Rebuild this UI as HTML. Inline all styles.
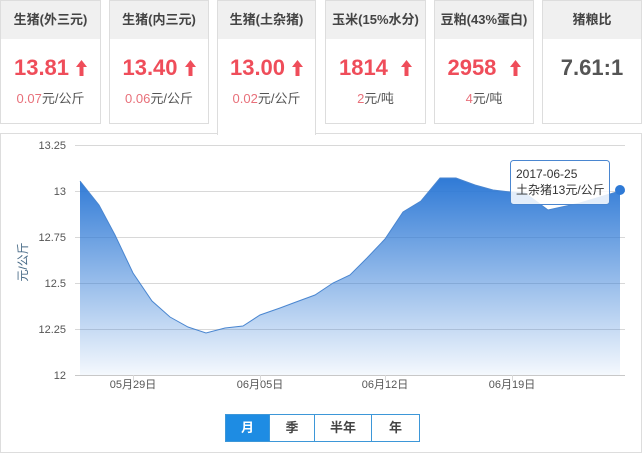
<!DOCTYPE html><html><head><meta charset="utf-8"><style>
body{margin:0;width:642px;height:453px;background:#fff;font-family:"Liberation Sans","Noto Sans CJK SC",sans-serif;position:relative;overflow:hidden}
.c{position:absolute;top:0;height:124px;border:1px solid #ddd;background:#fff;box-sizing:border-box;text-align:center}
.c .h{height:38px;background:#f0f0f0;line-height:38px;font-size:13px;font-weight:bold;color:#444}
.c .v{margin-top:16px;font-size:22px;font-weight:bold;color:#ef4d5a;height:26px;line-height:26px}
.c .v svg{margin-left:7px;vertical-align:-1px}
.c .s{margin-top:7px;font-size:13px;color:#555}
.c .s b{font-weight:normal;color:#e8707a}
.panel{position:absolute;left:0;top:133px;width:642px;height:320px;border:1px solid #ddd;box-sizing:border-box}
.btns{position:absolute;left:225px;top:414px;height:28px;display:flex;border:1px solid #3d97d8;box-sizing:border-box}
.btns div{height:26px;line-height:26px;text-align:center;font-size:13px;font-weight:bold;color:#444;border-left:1px solid #3d97d8}
</style></head><body>
<div class="c" style="left:0;width:101px"><div class="h">生猪(外三元)</div><div class="v">13.81<svg width="11" height="16" viewBox="0 0 11 16"><path d="M5.5,0 L11,7 L7.5,7 L7.5,16 L3.5,16 L3.5,7 L0,7Z" fill="#ef4d5a"/></svg></div><div class="s"><b>0.07</b>元/公斤</div></div>
<div class="c" style="left:109px;width:100px"><div class="h">生猪(内三元)</div><div class="v">13.40<svg width="11" height="16" viewBox="0 0 11 16"><path d="M5.5,0 L11,7 L7.5,7 L7.5,16 L3.5,16 L3.5,7 L0,7Z" fill="#ef4d5a"/></svg></div><div class="s"><b>0.06</b>元/公斤</div></div>
<div class="panel"></div>
<div class="c" style="left:217px;width:99px;height:135px;border-bottom:none;z-index:2"><div class="h">生猪(土杂猪)</div><div class="v">13.00<svg width="11" height="16" viewBox="0 0 11 16"><path d="M5.5,0 L11,7 L7.5,7 L7.5,16 L3.5,16 L3.5,7 L0,7Z" fill="#ef4d5a"/></svg></div><div class="s"><b>0.02</b>元/公斤</div></div>
<div class="c" style="left:325px;width:101px"><div class="h">玉米(15%水分)</div><div class="v">1814 <svg width="11" height="16" viewBox="0 0 11 16"><path d="M5.5,0 L11,7 L7.5,7 L7.5,16 L3.5,16 L3.5,7 L0,7Z" fill="#ef4d5a"/></svg></div><div class="s"><b>2</b>元/吨</div></div>
<div class="c" style="left:434px;width:100px"><div class="h">豆粕(43%蛋白)</div><div class="v">2958 <svg width="11" height="16" viewBox="0 0 11 16"><path d="M5.5,0 L11,7 L7.5,7 L7.5,16 L3.5,16 L3.5,7 L0,7Z" fill="#ef4d5a"/></svg></div><div class="s"><b>4</b>元/吨</div></div>
<div class="c" style="left:542px;width:100px"><div class="h">猪粮比</div><div class="v" style="color:#555">7.61:1</div></div>
<svg style="position:absolute;left:0;top:0" width="642" height="453" font-family="Liberation Sans,Noto Sans CJK SC,sans-serif">
<defs><linearGradient id="g" x1="0" y1="0" x2="0" y2="1"><stop offset="0" stop-color="#2f7ad6"/><stop offset="1" stop-color="#2f7ad6" stop-opacity="0.05"/></linearGradient></defs>
<g stroke="#d8d8d8" stroke-width="1"><line x1="75" y1="145.5" x2="625" y2="145.5"/><line x1="75" y1="191.5" x2="625" y2="191.5"/><line x1="75" y1="237.5" x2="625" y2="237.5"/><line x1="75" y1="283.5" x2="625" y2="283.5"/><line x1="75" y1="329.5" x2="625" y2="329.5"/><line x1="75" y1="375.5" x2="625" y2="375.5" stroke="#c8c8c8"/>
<line x1="133.5" y1="375" x2="133.5" y2="381"/><line x1="260.5" y1="375" x2="260.5" y2="381"/><line x1="385.5" y1="375" x2="385.5" y2="381"/><line x1="512.5" y1="375" x2="512.5" y2="381"/></g>
<path d="M80,181 L99,205 115,235 133,273 152,301 170,317 188,327 206,333 225,328 243,326 260,315 280,308 296,302 315,295 333,283 350,275 367,258 385,239 403,212 421,201 440,178 456,178 475,185 493,190 510,192 525,193 548,210 580,203 620,191 L620,375 L80,375Z" fill="url(#g)"/>
<path d="M80,181 L99,205 115,235 133,273 152,301 170,317 188,327 206,333 225,328 243,326 260,315 280,308 296,302 315,295 333,283 350,275 367,258 385,239 403,212 421,201 440,178 456,178 475,185 493,190 510,192 525,193 548,210 580,203 620,191" fill="none" stroke="#4a86d0" stroke-width="1"/>
<g font-size="11" fill="#555" text-anchor="end"><text x="66" y="149">13.25</text><text x="66" y="195">13</text><text x="66" y="241">12.75</text><text x="66" y="287">12.5</text><text x="66" y="333">12.25</text><text x="66" y="379">12</text></g>
<g font-size="11" fill="#555" text-anchor="middle"><text x="133" y="388">05月29日</text><text x="260" y="388">06月05日</text><text x="385" y="388">06月12日</text><text x="512" y="388">06月19日</text></g>
<text transform="translate(27,262) rotate(-90)" font-size="12" fill="#4a6c88" text-anchor="middle">元/公斤</text>
<rect x="510.5" y="160.5" width="99" height="44" rx="3" fill="#fff" fill-opacity="0.85" stroke="#4a86d0"/>
<text x="516" y="178" font-size="12" fill="#333">2017-06-25</text><text x="516" y="194" font-size="12" fill="#333">土杂猪13元/公斤</text>
<circle cx="620" cy="190" r="5" fill="#2f7ad6"/>
</svg>
<div class="btns"><div style="width:43px;background:#1e8ce3;color:#fff;border-left:none">月</div><div style="width:44px">季</div><div style="width:56px">半年</div><div style="width:47px">年</div></div>
</body></html>
